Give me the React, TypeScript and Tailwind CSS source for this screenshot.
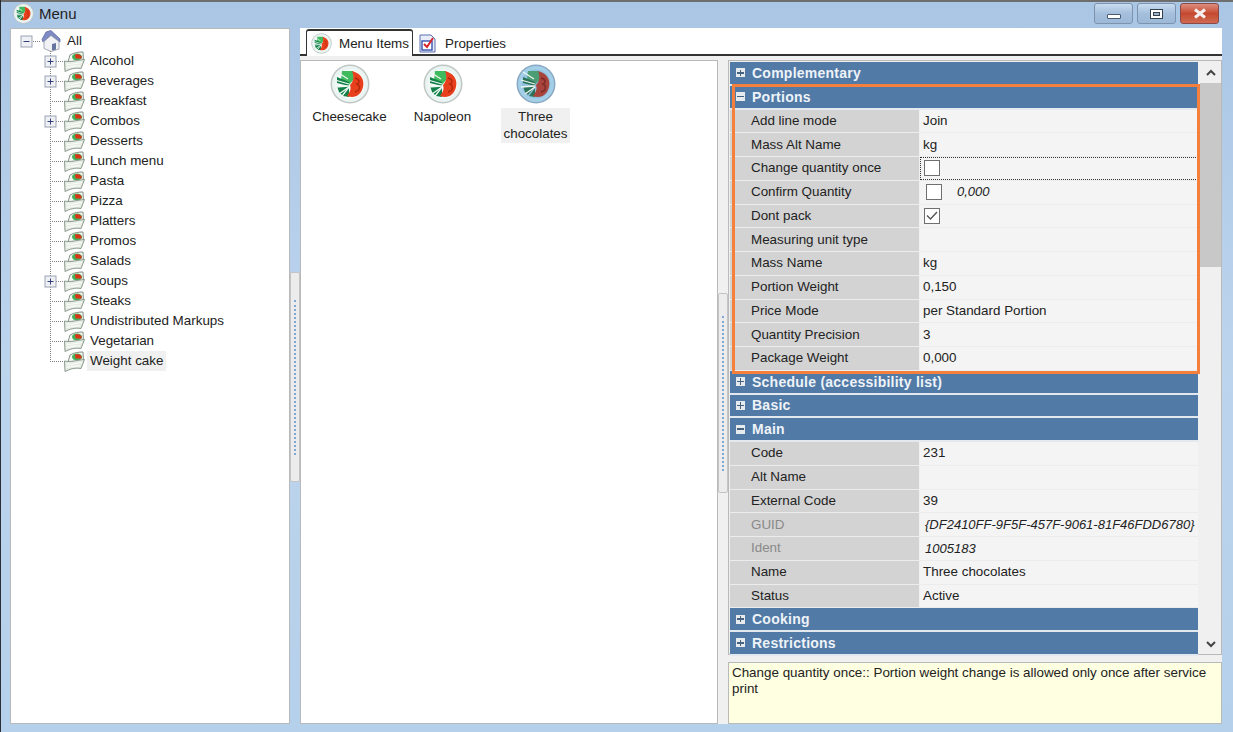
import type { ReactNode } from 'react';

const FONT = "font-['Liberation_Sans',Arial,sans-serif]";

const TREE_ITEMS: { label: string; plus?: boolean }[] = [
  { label: 'Alcohol', plus: true },
  { label: 'Beverages', plus: true },
  { label: 'Breakfast' },
  { label: 'Combos', plus: true },
  { label: 'Desserts' },
  { label: 'Lunch menu' },
  { label: 'Pasta' },
  { label: 'Pizza' },
  { label: 'Platters' },
  { label: 'Promos' },
  { label: 'Salads' },
  { label: 'Soups', plus: true },
  { label: 'Steaks' },
  { label: 'Undistributed Markups' },
  { label: 'Vegetarian' },
  { label: 'Weight cake' },
];

function Plate({ size = 40, blue = false }: { size?: number; blue?: boolean }) {
  return (
    <svg width={size} height={size} viewBox="0 0 40 40" className="shrink-0">
      <circle cx="20" cy="20" r="19.5" fill={blue ? '#8aa9c2' : '#bfc6c3'} />
      <circle cx="20" cy="20" r="18" fill={blue ? '#a4cfe8' : '#eaf5f3'} />
      <circle cx="20" cy="20" r="14.5" fill={blue ? '#93c2de' : '#f6faf9'} />
      <path d="M12 7 L23 7 L24 15 L18 22 L11 16 Z" fill={blue ? '#4c9c74' : '#3fbb5d'} />
      <path d="M7 13 L19 18 L19 22 L7 19 Z M7 22 L19 22 L12 31 L9 28 Z M13 32 L19 24 L19 33 Z" fill={blue ? '#2a7358' : '#128048'} />
      <path d="M7 8 L18 15 M5 16 L19 20 M5 23 L19 22 M9 30 L19 23" stroke="#eef8f2" strokeWidth="1.3" fill="none" />
      <path d="M22 7 C30 9 35 15 33 23 C31 31 25 35 17 32 C21 27 21 24 20 21 C24 17 24 12 22 7Z" fill={blue ? '#a8443c' : '#e8401c'} />
      <path d="M25 14 C30 15 30 19 27 20 C31 22 30 27 25 28" stroke={blue ? '#7c2b28' : '#b5280f'} strokeWidth="1.4" fill="none" />
    </svg>
  );
}

function FolderIcon() {
  return (
    <svg width="22" height="21" viewBox="0 0 22 21" className="shrink-0">
      <path d="M5 11 L7 4 C11 1.5 16 1 20 1 L20.5 11 Z" fill="#f5f7f2" stroke="#74857a" strokeWidth="0.9" />
      <ellipse cx="14" cy="6" rx="5" ry="3.4" fill="#45b05a" />
      <path d="M12 3.6 C16 2.6 19.5 4.5 18.5 7.4 L12.5 7.4 Z" fill="#dc3418" />
      <path d="M1.5 10 C8 11.5 14 9 21.5 8.5 L18 17.5 C12 16.5 7 18 2 20.5 Z" fill="#e6ece3" stroke="#7f9083" strokeWidth="0.9" />
      <path d="M3.5 13 C9 14 14 12 19 11.5 M3.5 16.5 C9 15 13 15 17 14.8" stroke="#fbfcfa" strokeWidth="1.1" fill="none" />
    </svg>
  );
}

function HouseIcon() {
  return (
    <svg width="21" height="22" viewBox="0 0 21 22" className="shrink-0">
      <path d="M5 2 L10 0.5 L19 9 L19 12 L10 5 L2 12 L1 9.5 Z" fill="#7e8bc4" stroke="#56639c" strokeWidth="0.7" />
      <path d="M3 11.5 L10 5.5 L18 11.5 L18 19 L10 21.5 L3 18.5 Z" fill="#f1f2f5" stroke="#8f95a3" strokeWidth="0.8" />
      <path d="M11 14 L15 13 L15 19.5 L11 20.5 Z" fill="#63749f" />
    </svg>
  );
}

function ExpandBox({ x, y, plus }: { x: number; y: number; plus: boolean }) {
  return (
    <g>
      <rect x={x - 5.5} y={y - 5.5} width="11" height="11" fill="#eef0f4" stroke="#9aa3b5" />
      <path d={`M${x - 3} ${y}H${x + 3}`} stroke="#33407a" />
      {plus && <path d={`M${x} ${y - 3}V${y + 3}`} stroke="#33407a" />}
    </g>
  );
}

function TreeRow({ label, plus, last, selected }: { label: string; plus?: boolean; last?: boolean; selected?: boolean }) {
  return (
    <div className="flex h-5 items-center">
      <svg width="52" height="20" viewBox="0 0 52 20" className="shrink-0">
        <path d={`M39.5 0V${last ? 10 : 20}`} stroke="#808080" strokeDasharray="1 1" />
        <path d="M39 10.5H52" stroke="#808080" strokeDasharray="1 1" />
        {plus && <ExpandBox x={39.5} y={10.5} plus />}
      </svg>
      <FolderIcon />
      <span className={`ml-[2px] px-[3px] leading-5 ${selected ? 'bg-[#f0f0f0]' : ''}`}>{label}</span>
    </div>
  );
}

function Tree() {
  return (
    <div className="w-[280px] shrink-0 border border-[#b9b9b9] bg-white pt-[2px] text-[13.4px] text-[#222]">
      <div className="flex h-5 items-center pl-[4px]">
        <svg width="26" height="20" viewBox="0 0 26 20" className="shrink-0">
          <path d="M12 10.5H26" stroke="#808080" strokeDasharray="1 1" />
          <ExpandBox x={11.5} y={10.5} plus={false} />
        </svg>
        <HouseIcon />
        <span className="ml-[5px]">All</span>
      </div>
      {TREE_ITEMS.map((item, i) => (
        <TreeRow
          key={item.label}
          label={item.label}
          plus={item.plus}
          last={i === TREE_ITEMS.length - 1}
          selected={item.label === 'Weight cake'}
        />
      ))}
    </div>
  );
}

function Splitter({ top, height }: { top: string; height: string }) {
  return (
    <div className={`flex w-[10px] shrink-0 flex-col ${top}`}>
      <div className={`flex ${height} items-center justify-center rounded-[2px] border border-[#c4c4c4] bg-[#ececec]`}>
        <div className="h-[155px] border-l-2 border-dotted border-[#7fa8d6]" />
      </div>
    </div>
  );
}

function WinButton({ children, red = false }: { children: ReactNode; red?: boolean }) {
  return (
    <div
      className={`flex h-[21px] w-[39px] items-center justify-center rounded-[3px] border ${
        red
          ? 'border-[#8a4a4a] bg-gradient-to-b from-[#dd8d7e] via-[#c5482f] to-[#cf6a52]'
          : 'border-[#7d93ad] bg-gradient-to-b from-[#c9dcf0] via-[#a5bfdc] to-[#9cb9d8]'
      }`}
    >
      {children}
    </div>
  );
}

function TitleBar() {
  return (
    <div className="flex h-[28px] shrink-0 items-start border-t-2 border-[#6e6e6e] pl-[12px] pr-[14px]">
      <div className="mt-[1px]">
        <Plate size={21} />
      </div>
      <span className="ml-[5px] mt-[3px] text-[15px] leading-[18px] text-[#222]">Menu</span>
      <div className="ml-auto mt-[1px] flex gap-[4px]">
        <WinButton>
          <div className="mt-[6px] h-[5px] w-[14px] rounded-[1px] border border-[#4a5a70] bg-white" />
        </WinButton>
        <WinButton>
          <div className="flex h-[10px] w-[13px] items-center justify-center border border-[#33404f] bg-white">
            <div className="h-[4px] w-[7px] border border-[#33404f] bg-[#9fb4cb]" />
          </div>
        </WinButton>
        <WinButton red>
          <svg width="14" height="11" viewBox="0 0 14 11">
            <path d="M2 1.5L12 9.5M12 1.5L2 9.5" stroke="#f4efee" strokeWidth="3" />
          </svg>
        </WinButton>
      </div>
    </div>
  );
}

function PropertiesIcon() {
  return (
    <svg width="17" height="19" viewBox="0 0 17 19" className="shrink-0">
      <path d="M1 1H12L16 5V18H1Z" fill="#e8ecf6" stroke="#5d6fb0" />
      <rect x="3" y="7" width="10" height="9" fill="#fff" stroke="#3a55b0" strokeWidth="1.4" />
      <path d="M5 10L8 13L14 4" stroke="#d8232a" strokeWidth="2" fill="none" />
    </svg>
  );
}

function Tabs() {
  return (
    <div className="flex h-[28px] shrink-0 items-end border-b-2 border-[#333] bg-white pl-[6px] text-[13.4px] text-[#222]">
      <div className="-mb-[2px] flex h-[27px] w-[107px] items-center gap-[7px] rounded-t-[3px] border-x border-t-2 border-[#333] border-b-0 bg-white pl-[4px]">
        <Plate size={21} />
        <span className="mt-[1px]">Menu Items</span>
      </div>
      <div className="-mb-[2px] flex h-[26px] items-center gap-[9px] pl-[6px]">
        <PropertiesIcon />
        <span className="mt-[2px]">Properties</span>
      </div>
    </div>
  );
}

function ListItem({ label, selected }: { label: string; selected?: boolean }) {
  return (
    <div className="flex w-[93px] flex-col items-center">
      <Plate blue={selected} />
      <div className={`mt-[4px] text-center leading-[16.5px] ${selected ? 'w-[69px] bg-[#f0f0f0] py-[1px]' : 'py-[1px]'}`}>
        {label}
      </div>
    </div>
  );
}

function ItemList() {
  return (
    <div className="flex w-[418px] shrink-0 items-start border border-[#b9b9b9] bg-white pl-[2px] pt-[3px] text-[13.4px] text-[#222]">
      <ListItem label="Cheesecake" />
      <ListItem label="Napoleon" />
      <ListItem label="Three chocolates" selected />
    </div>
  );
}

function GroupRow({ label, open }: { label: string; open?: boolean }) {
  return (
    <div className="flex h-[23.75px] items-center border-b-2 border-[#e4e9ef] bg-[#527aa6] pl-[6px] text-[14px] font-bold tracking-[0.25px] text-[#eef3f8]">
      <span className="flex h-[9px] w-[9px] items-center justify-center bg-[#e8ebee]">
        <span className="relative h-[1.5px] w-[7px] bg-[#44627f]">
          {!open && <span className="absolute left-[2.75px] top-[-2.5px] h-[6.5px] w-[1.5px] bg-[#44627f]" />}
        </span>
      </span>
      <span className="ml-[7px] mt-[1px]">{label}</span>
    </div>
  );
}

function Check({ checked }: { checked?: boolean }) {
  return (
    <span className="flex h-[16px] w-[16px] shrink-0 items-center justify-center border border-[#707070] bg-white">
      {checked && (
        <svg width="12" height="10" viewBox="0 0 12 10">
          <path d="M1 4.5L4.5 8L11 1" stroke="#555" strokeWidth="1.4" fill="none" />
        </svg>
      )}
    </span>
  );
}

function PropRow({ label, children, muted, focus }: { label: string; children?: ReactNode; muted?: boolean; focus?: boolean }) {
  return (
    <div className="flex h-[23.75px] border-b border-[#ececec]">
      <div className={`flex w-[189px] shrink-0 items-center bg-[#d3d3d3] pl-[21px] ${muted ? 'text-[#8a8a8a]' : ''}`}>{label}</div>
      <div
        className={`ml-[1px] flex min-w-0 flex-1 items-center overflow-hidden whitespace-nowrap bg-[#f4f4f4] pl-[3px] ${
          focus ? 'border border-dotted border-[#333]' : ''
        }`}
      >
        {children}
      </div>
    </div>
  );
}

function Scrollbar() {
  return (
    <div className="flex w-[21px] shrink-0 flex-col bg-[#f0f0f0]">
      <div className="flex h-[21px] items-center justify-center">
        <svg width="10" height="7" viewBox="0 0 10 7">
          <path d="M1 6L5 2L9 6" stroke="#444" strokeWidth="2" fill="none" />
        </svg>
      </div>
      <div className="h-[184px] bg-[#c8c8c8]" />
      <div className="mt-auto flex h-[19px] items-center justify-center">
        <svg width="10" height="7" viewBox="0 0 10 7">
          <path d="M1 1L5 5L9 1" stroke="#444" strokeWidth="2" fill="none" />
        </svg>
      </div>
    </div>
  );
}

function PropertyGrid() {
  const italic = 'italic text-[13px]';
  return (
    <div className="relative flex h-[595px] shrink-0 border border-[#b9b9b9] bg-[#f0f0f0] pl-[1px] pt-[1px] text-[13.4px] text-[#222]">
      <div className="min-w-0 flex-1">
        <GroupRow label="Complementary" />
        <GroupRow label="Portions" open />
        <PropRow label="Add line mode">Join</PropRow>
        <PropRow label="Mass Alt Name">kg</PropRow>
        <PropRow label="Change quantity once" focus>
          <Check />
        </PropRow>
        <PropRow label="Confirm Quantity">
          <span className="ml-[3px]">
            <Check />
          </span>
          <span className={`ml-[15px] ${italic}`}>0,000</span>
        </PropRow>
        <PropRow label="Dont pack">
          <span className="ml-[1px]">
            <Check checked />
          </span>
        </PropRow>
        <PropRow label="Measuring unit type" />
        <PropRow label="Mass Name">kg</PropRow>
        <PropRow label="Portion Weight">0,150</PropRow>
        <PropRow label="Price Mode">per Standard Portion</PropRow>
        <PropRow label="Quantity Precision">3</PropRow>
        <PropRow label="Package Weight">0,000</PropRow>
        <GroupRow label="Schedule (accessibility list)" />
        <GroupRow label="Basic" />
        <GroupRow label="Main" open />
        <PropRow label="Code">231</PropRow>
        <PropRow label="Alt Name" />
        <PropRow label="External Code">39</PropRow>
        <PropRow label="GUID" muted>
          <span className={`ml-[2px] ${italic}`}>{'{DF2410FF-9F5F-457F-9061-81F46FDD6780}'}</span>
        </PropRow>
        <PropRow label="Ident" muted>
          <span className={`ml-[2px] ${italic}`}>1005183</span>
        </PropRow>
        <PropRow label="Name">Three chocolates</PropRow>
        <PropRow label="Status">Active</PropRow>
        <GroupRow label="Cooking" />
        <GroupRow label="Restrictions" />
      </div>
      <div className="ml-[2px] flex">
        <Scrollbar />
      </div>
      {/* highlight frame drawn over the Portions group */}
      <div className="pointer-events-none absolute left-[3px] top-[23px] h-[290px] w-[468px] border-[3px] border-[#f5803e]" />
    </div>
  );
}

export default function App() {
  return (
    <div className={`flex h-[732px] w-[1233px] flex-col overflow-hidden border-l border-[#2a2f36] bg-gradient-to-b from-[#aac6e5] via-[#bdd4ed] to-[#b5d0eb] ${FONT}`}>
      <TitleBar />
      <div className="flex h-[696px] shrink-0 pl-[9px] pr-[11px]">
        <Tree />
        <Splitter top="pt-[244px]" height="h-[210px]" />
        <div className="flex min-w-0 flex-1 flex-col bg-[#f0f0f0]">
          <Tabs />
          <div className="mt-[4px] flex min-h-0 flex-1">
            <ItemList />
            <Splitter top="pt-[233px]" height="h-[200px]" />
            <div className="flex min-w-0 flex-1 flex-col">
              <PropertyGrid />
              <div className="mt-[7px] flex-1 border border-[#b9b9b9] bg-[#ffffe1] px-[3px] pt-[2px] text-[13.4px] leading-[16px] text-[#222]">
                Change quantity once:: Portion weight change is allowed only once after service print
              </div>
            </div>
          </div>
        </div>
      </div>
    </div>
  );
}
